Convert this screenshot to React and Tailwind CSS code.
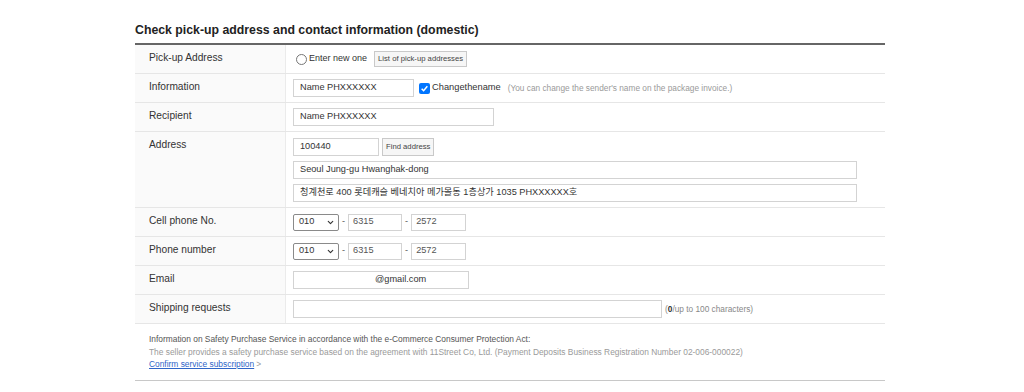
import { ChevronDown } from 'lucide-react';

const font = { fontFamily: '"Liberation Sans", Arial, "Noto Sans CJK KR", sans-serif' };

const Row = ({ label, children, className = '' }) => (
    <div className="grid grid-cols-[151px_1fr] border-b border-[#e6e6e6]">
        <div className="bg-[#fafafa] border-r border-[#ebebeb] pl-[14px] pt-[6px] text-[10.2px] leading-[14px] text-[#333]">
            {label}
        </div>
        <div className={`pl-[7px] ${className}`}>{children}</div>
    </div>
);

const Field = ({ w, children, className = '' }) => (
    <div className={`h-[18px] border border-[#d3d3d3] bg-white pl-[6px] flex items-center text-[9.2px] text-[#333] whitespace-nowrap ${w} ${className}`}>
        {children}
    </div>
);

const SmallButton = ({ children }) => (
    <div className="h-[16px] px-[3px] border border-[#c9c9c9] bg-[#f6f6f6] flex items-center text-[7.7px] text-[#444] whitespace-nowrap">
        {children}
    </div>
);

const PhoneRow = () => (
    <div className="flex items-center h-[28px] text-[9.2px] text-[#555]">
        <div className="w-[46px] h-[17px] border border-[#8a8a8a] rounded-[2px] bg-white flex items-center justify-between pl-[5px] pr-[3px] text-[#333]">
            <span>010</span>
            <ChevronDown size={9} strokeWidth={3} className="text-[#333]" />
        </div>
        <span className="mx-[3px]">-</span>
        <div className="w-[54px] h-[17px] border border-[#d3d3d3] pl-[4px] flex items-center">6315</div>
        <span className="mx-[3px]">-</span>
        <div className="w-[55px] h-[17px] border border-[#d3d3d3] pl-[4px] flex items-center">2572</div>
    </div>
);

export default function App() {
    return (
        <div className="min-h-screen bg-white" style={font}>
            <div className="ml-[135px] w-[750px] pt-[23px]">
                {/* Title */}
                <h2 className="text-[12.3px] leading-[15px] font-bold text-[#222] mb-[5px]">
                    Check pick-up address and contact information (domestic)
                </h2>

                <div className="border-t-2 border-[#666]">
                    <Row label="Pick-up Address">
                        <div className="flex items-center h-[28px]">
                            <span className="ml-[3px] w-[11px] h-[11px] rounded-full border border-[#767676] bg-white" />
                            <span className="ml-[2px] mr-[7px] text-[9px] text-[#333]">Enter new one</span>
                            <SmallButton>List of pick-up addresses</SmallButton>
                        </div>
                    </Row>

                    <Row label="Information">
                        <div className="flex items-center h-[28px]">
                            <Field w="w-[121px]">Name PHXXXXXX</Field>
                            <span className="ml-[5px] w-[11px] h-[11px] rounded-[2px] bg-[#0075ff] flex items-center justify-center">
                                <svg width="9" height="9" viewBox="0 0 12 12">
                                    <path d="M2.2 6.4 L4.8 9 L9.8 3" fill="none" stroke="white" strokeWidth="2" />
                                </svg>
                            </span>
                            <span className="ml-[2px] text-[9.3px] text-[#333] [word-spacing:-2.6px]">Change the name</span>
                            <span className="ml-[7px] text-[8.3px] text-[#9a9a9a]">
                                (You can change the sender's name on the package invoice.)
                            </span>
                        </div>
                    </Row>

                    <Row label="Recipient">
                        <div className="flex items-center h-[28px]">
                            <Field w="w-[201px]">Name PHXXXXXX</Field>
                        </div>
                    </Row>

                    <Row label="Address" className="pt-[6px] pb-[5px] flex flex-col gap-[5px]">
                        <div className="flex items-center gap-[3px]">
                            <Field w="w-[86px]">100440</Field>
                            <div className="h-[18px] px-[3px] border border-[#c9c9c9] bg-[#f6f6f6] flex items-center text-[7.7px] text-[#444]">
                                Find address
                            </div>
                        </div>
                        <Field w="w-[564px]">Seoul Jung-gu Hwanghak-dong</Field>
                        <Field w="w-[564px]">청계천로 400 롯데캐슬 베네치아 메가몰동 1층상가 1035 PHXXXXXX호</Field>
                    </Row>

                    <Row label="Cell phone No.">
                        <PhoneRow />
                    </Row>

                    <Row label="Phone number">
                        <PhoneRow />
                    </Row>

                    <Row label="Email">
                        <div className="flex items-center h-[28px]">
                            <Field w="w-[176px]" className="pl-[81px]">@gmail.com</Field>
                        </div>
                    </Row>

                    <Row label="Shipping requests">
                        <div className="flex items-center h-[28px]">
                            <Field w="w-[369px]" />
                            <span className="ml-[3px] text-[8.3px] text-[#888]">
                                (<b className="text-[#333]">0</b>/up to 100 characters)
                            </span>
                        </div>
                    </Row>
                </div>

                {/* Safety purchase info */}
                <div className="pl-[14px] pt-[9px] pb-[9px] text-[8.4px] leading-[12.5px] border-b border-[#c8c8c8]">
                    <p className="text-[#555]">
                        Information on Safety Purchase Service in accordance with the e-Commerce Consumer Protection Act:
                    </p>
                    <p className="text-[#9a9a9a]">
                        The seller provides a safety purchase service based on the agreement with 11Street Co, Ltd. (Payment Deposits Business Registration Number 02-006-000022)
                    </p>
                    <p>
                        <a className="text-[#2f66c8] underline">Confirm service subscription</a>
                        <span className="ml-[2px] text-[#999]">&gt;</span>
                    </p>
                </div>
            </div>
        </div>
    );
}
